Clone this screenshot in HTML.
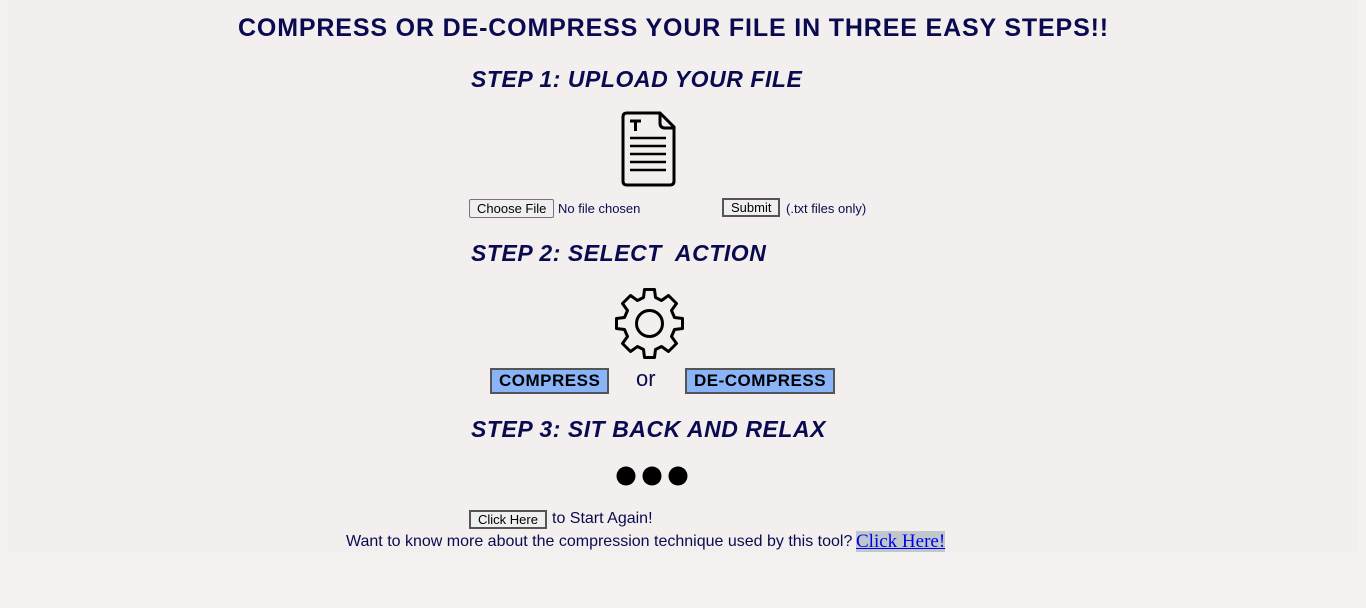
<!DOCTYPE html>
<html><head><style>
html,body{margin:0;width:1366px;height:608px;background:#f4f2f1;overflow:hidden;font-family:"Liberation Sans",Arial,sans-serif;color:#0a0a50}
#p{position:absolute;left:8px;top:0;width:1350px;height:552px;background:#f2efee}
.a{position:absolute;white-space:nowrap}
h1{position:absolute;margin:0;left:238px;top:14px;font-size:25px;letter-spacing:0.85px;font-weight:bold;color:#0a0a50}
.st{font-size:23px;font-weight:bold;font-style:italic;color:#0a0a50;letter-spacing:0.55px}
.btn{position:absolute;font-size:13px;background:#efefef;border:1px solid #767676;border-radius:2px;color:#000;padding:1px 7px;line-height:15px}
.btn2{border:2px solid #555;border-radius:0;padding:0 7px}
.big{position:absolute;background:#8ab4f8;border:2px solid #555;font-weight:bold;font-size:17px;letter-spacing:0.5px;color:#000;padding:0 7px;line-height:22px}
</style></head><body>
<div id="p"></div>
<h1>COMPRESS OR DE-COMPRESS YOUR FILE IN THREE EASY STEPS!!</h1>
<div class="a st" style="left:471px;top:66px">STEP 1: UPLOAD YOUR FILE</div>
<svg class="a" style="left:620px;top:111px" width="56" height="76" viewBox="0 0 56 76">
<path d="M7 2H40L54 16V70Q54 74 50 74H7Q3 74 3 70V6Q3 2 7 2Z" fill="none" stroke="#000" stroke-width="3"/>
<path d="M40 2V12Q40 17 45 17H54" fill="none" stroke="#000" stroke-width="3"/>
<path d="M10 10H21M15.5 10V20" stroke="#000" stroke-width="3"/>
<path d="M10 27H46M10 35H46M10 43H46M10 51H46M10 59H46" stroke="#000" stroke-width="2.5"/>
</svg>
<div class="btn" style="left:469px;top:199px">Choose File</div>
<div class="a" style="left:558px;top:201px;font-size:13px">No file chosen</div>
<div class="btn btn2" style="left:722px;top:198px">Submit</div>
<div class="a" style="left:786px;top:201px;font-size:13px">(.txt files only)</div>
<div class="a st" style="left:471px;top:240px">STEP 2: SELECT&nbsp; ACTION</div>
<svg class="a" style="left:613px;top:287px" width="73" height="73" viewBox="-36.5 -36.5 73 73">
<g fill="none" stroke="#000" stroke-width="3" stroke-linejoin="round">
<path d="M-5 -34H5L6 -26L12 -23L19 -28L27 -20L22 -13L25 -6L33 -5V5L25 6L22 13L27 20L19 28L12 23L6 26L5 34H-5L-6 26L-12 23L-19 28L-27 20L-22 13L-25 6L-33 5V-5L-25 -6L-22 -13L-27 -20L-19 -28L-12 -23L-6 -26Z"/>
<circle r="13"/></g></svg>
<div class="big" style="left:490px;top:368px">COMPRESS</div>
<div class="a" style="left:636px;top:366px;font-size:22px">or</div>
<div class="big" style="left:685px;top:368px">DE-COMPRESS</div>
<div class="a st" style="left:471px;top:416px">STEP 3: SIT BACK AND RELAX</div>
<svg class="a" style="left:616px;top:465px" width="74" height="22"><circle cx="10" cy="11" r="9.5"/><circle cx="36" cy="11" r="9.5"/><circle cx="62" cy="11" r="9.5"/></svg>
<div class="btn btn2" style="left:469px;top:510px">Click Here</div>
<div class="a" style="left:552px;top:510px;font-size:16px">to Start Again!</div>
<div class="a" style="left:346px;top:533px;font-size:16px">Want to know more about the compression technique used by this tool?</div>
<div class="a" style="left:856px;top:531px;font-size:19px;font-family:'Liberation Serif',serif;background:#c0c8cc;color:#00e;text-decoration:underline;line-height:21px">Click Here!</div>
</body></html>
